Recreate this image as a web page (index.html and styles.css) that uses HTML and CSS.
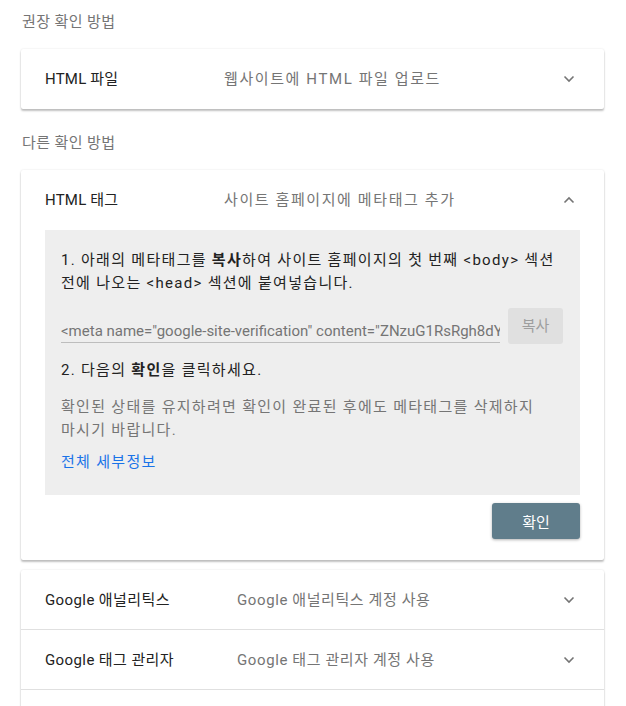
FILE: index.html
```html
<!DOCTYPE html>
<html lang="ko">
<head>
<meta charset="utf-8">
<link rel="stylesheet" href="styles.css">
</head>
<body>
<div class="page">
  <div class="section-title first">권장 확인 방법</div>
  <div class="card">
    <div class="row">
      <div class="row-title">HTML 파일</div>
      <div class="row-desc wide">웹사이트에 HTML 파일 업로드</div>
      <svg class="chev" width="12" height="8" viewBox="0 0 12 8"><polyline points="1.5,1.5 6,6 10.5,1.5" fill="none" stroke="#757575" stroke-width="1.6"/></svg>
    </div>
  </div>

  <div class="section-title">다른 확인 방법</div>
  <div class="card">
    <div class="row">
      <div class="row-title">HTML 태그</div>
      <div class="row-desc wide">사이트 홈페이지에 메타태그 추가</div>
      <svg class="chev" width="12" height="8" viewBox="0 0 12 8"><polyline points="1.5,6.5 6,2 10.5,6.5" fill="none" stroke="#757575" stroke-width="1.6"/></svg>
    </div>
    <div class="detail">
      <p class="step">1. 아래의 메타태그를 <b>복사</b>하여 사이트 홈페이지의 첫 번째 &lt;body&gt; 섹션 전에 나오는 &lt;head&gt; 섹션에 붙여넣습니다.</p>
      <div class="copy-row">
        <div class="field">&lt;meta name="google-site-verification" content="ZNzuG1RsRgh8dYq0pLxW3" /&gt;</div>
        <button class="copy-btn">복사</button>
      </div>
      <p class="step step2">2. 다음의 <b>확인</b>을 클릭하세요.</p>
      <p class="note">확인된 상태를 유지하려면 확인이 완료된 후에도 메타태그를 삭제하지 마시기 바랍니다.</p>
      <a class="link" href="#">전체 세부정보</a>
    </div>
    <div class="actions">
      <button class="verify-btn">확인</button>
    </div>
  </div>

  <div class="card list">
    <div class="row">
      <div class="row-title">Google 애널리틱스</div>
      <div class="row-desc">Google 애널리틱스 계정 사용</div>
      <svg class="chev" width="12" height="8" viewBox="0 0 12 8"><polyline points="1.5,1.5 6,6 10.5,1.5" fill="none" stroke="#757575" stroke-width="1.6"/></svg>
    </div>
    <div class="row">
      <div class="row-title">Google 태그 관리자</div>
      <div class="row-desc">Google 태그 관리자 계정 사용</div>
      <svg class="chev" width="12" height="8" viewBox="0 0 12 8"><polyline points="1.5,1.5 6,6 10.5,1.5" fill="none" stroke="#757575" stroke-width="1.6"/></svg>
    </div>
    <div class="row">
      <div class="row-title">도메인 이름 공급업체</div>
      <div class="row-desc">DNS 레코드와 Google 연결</div>
      <svg class="chev" width="12" height="8" viewBox="0 0 12 8"><polyline points="1.5,1.5 6,6 10.5,1.5" fill="none" stroke="#757575" stroke-width="1.6"/></svg>
    </div>
  </div>
</div>
</body>
</html>
```

FILE: styles.css
```css
* { box-sizing: border-box; }
html, body { margin: 0; padding: 0; background: #fff; }
body {
  font-family: Roboto, "Noto Sans CJK KR", sans-serif;
  font-size: 15px;
  font-weight: 400;
  color: #212121;
  word-break: keep-all;
  overflow: hidden;
}
.page {
  padding: 0 22px 40px 21px;
}
.section-title {
  font-size: 15px;
  line-height: 20px;
  color: #757575;
  letter-spacing: 0.4px;
  margin: 24px 0 17px 1px;
}
.section-title.first { margin-top: 12px; }
.card {
  background: #fff;
  border-radius: 2px;
  box-shadow: 0 2px 2px rgba(0,0,0,0.24), 0 0 2px rgba(0,0,0,0.12);
}
.card + .card { margin-top: 10px; }
.row {
  display: flex;
  align-items: center;
  height: 60px;
  padding: 0 29px 0 24px;
}
.card:first-of-type .row { height: 59px; }
.list .row { border-bottom: 1px solid #e0e0e0; }
.row-title {
  width: 179px;
  flex: none;
  line-height: 20px;
  color: #222;
  letter-spacing: 0.2px;
}
.list .row-title { width: 192px; letter-spacing: 0.4px; }
.row-desc {
  flex: 1;
  line-height: 20px;
  color: #757575;
  letter-spacing: 0.6px;
}
.row-desc.wide { letter-spacing: 1.6px; }
.chev { flex: none; display: block; }
.detail {
  margin: 0 24px;
  background: #eeeeee;
  padding: 19px 16px 21px 16px;
}
.detail p { margin: 0; }
.step {
  line-height: 23px;
  color: #222;
  letter-spacing: 1.3px;
}
.step b { font-weight: 700; }
.copy-row {
  display: flex;
  align-items: flex-end;
  gap: 8px;
  margin-top: 13px;
  padding-right: 1px;
}
.field {
  flex: 1;
  min-width: 0;
  white-space: nowrap;
  overflow: hidden;
  color: #757575;
  line-height: 22px;
  border-bottom: 1px solid #bdbdbd;
  margin-bottom: 1px;
}
.copy-btn {
  flex: none;
  width: 55px;
  height: 36px;
  border: none;
  border-radius: 3px;
  background: #e0e0e0;
  color: #9e9e9e;
  font-family: Roboto, "Noto Sans CJK KR", sans-serif;
  font-size: 15px;
  padding: 0 0 4px 0;
}
.step2 { margin-top: 15px !important; }
.note {
  margin-top: 14px !important;
  line-height: 23px;
  color: #757575;
  letter-spacing: 1.3px;
}
.link {
  display: block;
  margin-top: 9px;
  line-height: 23px;
  color: #1a73e8;
  text-decoration: none;
  letter-spacing: 1.3px;
}
.actions {
  display: flex;
  justify-content: flex-end;
  padding: 8px 24px 21px;
}
.verify-btn {
  width: 88px;
  height: 36px;
  border: none;
  border-radius: 3px;
  background: #607d8b;
  color: #fff;
  font-family: Roboto, "Noto Sans CJK KR", sans-serif;
  font-size: 15px;
  box-shadow: 0 1px 3px rgba(0,0,0,0.3);
}
```
